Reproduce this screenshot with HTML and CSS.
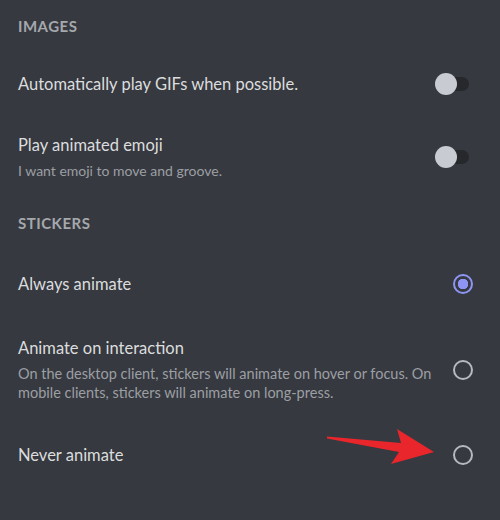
FILE: index.html
```html
<!DOCTYPE html>
<html>
<head>
<meta charset="utf-8">
<link rel="stylesheet" href="styles.css">
</head>
<body>
<div class="page">
  <div class="section-header h-images">Images</div>
  <div class="row r-gif">
    <div class="text"><div class="title">Automatically play GIFs when possible.</div></div>
    <div class="toggle"><span class="track"></span><span class="knob"></span></div>
  </div>
  <div class="row r-emoji">
    <div class="text">
      <div class="title">Play animated emoji</div>
      <div class="sub">I want emoji to move and groove.</div>
    </div>
    <div class="toggle"><span class="track"></span><span class="knob"></span></div>
  </div>
  <div class="section-header h-stickers">Stickers</div>
  <div class="row r-always">
    <div class="text"><div class="title">Always animate</div></div>
    <div class="radio checked"></div>
  </div>
  <div class="row r-interact">
    <div class="text">
      <div class="title">Animate on interaction</div>
      <div class="sub desc">On the desktop client, stickers will animate on hover or focus. On mobile clients, stickers will animate on long-press.</div>
    </div>
    <div class="radio"></div>
  </div>
  <div class="row r-never">
    <div class="text"><div class="title">Never animate</div></div>
    <div class="radio"></div>
  </div>
  <svg class="arrow" width="120" height="50" viewBox="320 420 120 50">
    <polygon points="327,436.5 401,443 397,429 434,452 391,464 399,452 327,438.5" fill="#e8262b"/>
  </svg>
</div>
</body>
</html>
```
FILE: styles.css
```css
html, body {
  margin: 0;
  padding: 0;
  background: #36393f;
}
.page {
  position: relative;
  width: 500px;
  height: 520px;
  font-family: Lato, "Noto Sans", sans-serif;
  color: #dcddde;
}
.section-header {
  display: flex;
  align-items: center;
  padding-left: 18px;
  text-transform: uppercase;
  font-size: 15px;
  font-weight: 700;
  color: #a5a8ad;
  letter-spacing: 0.5px;
}
.h-images { height: 52px; }
.h-stickers { height: 50px; }
.row {
  display: flex;
  align-items: center;
  padding-left: 18px;
}
.r-gif { height: 64px; }
.r-emoji { height: 82px; }
.r-always { height: 72px; }
.r-interact { height: 100px; }
.r-never { height: 70px; }
.text {
  flex: 1;
  min-width: 0;
}
.title {
  font-size: 16.5px;
  line-height: 20px;
  color: #dcddde;
}
.sub {
  font-size: 14px;
  line-height: 19px;
  color: #9c9fa4;
  margin-top: 6px;
}
.desc {
  width: 416px;
  font-size: 14.5px;
}
.toggle {
  position: relative;
  width: 34px;
  height: 22px;
  margin-right: 31px;
}
.track {
  position: absolute;
  left: 6px;
  right: 0;
  top: 4px;
  height: 14px;
  border-radius: 7px;
  background: #26282c;
}
.knob {
  position: absolute;
  left: 0;
  top: 0;
  width: 22px;
  height: 22px;
  border-radius: 50%;
  background: #c8cbd1;
}
.radio {
  box-sizing: border-box;
  width: 20px;
  height: 20px;
  border-radius: 50%;
  border: 2px solid #b6b9be;
  margin-right: 27px;
}
.radio.checked {
  border-color: #8e95f5;
  background: radial-gradient(circle, #8e95f5 0 5px, transparent 5.5px);
}
.arrow {
  position: absolute;
  left: 320px;
  top: 420px;
}
```
